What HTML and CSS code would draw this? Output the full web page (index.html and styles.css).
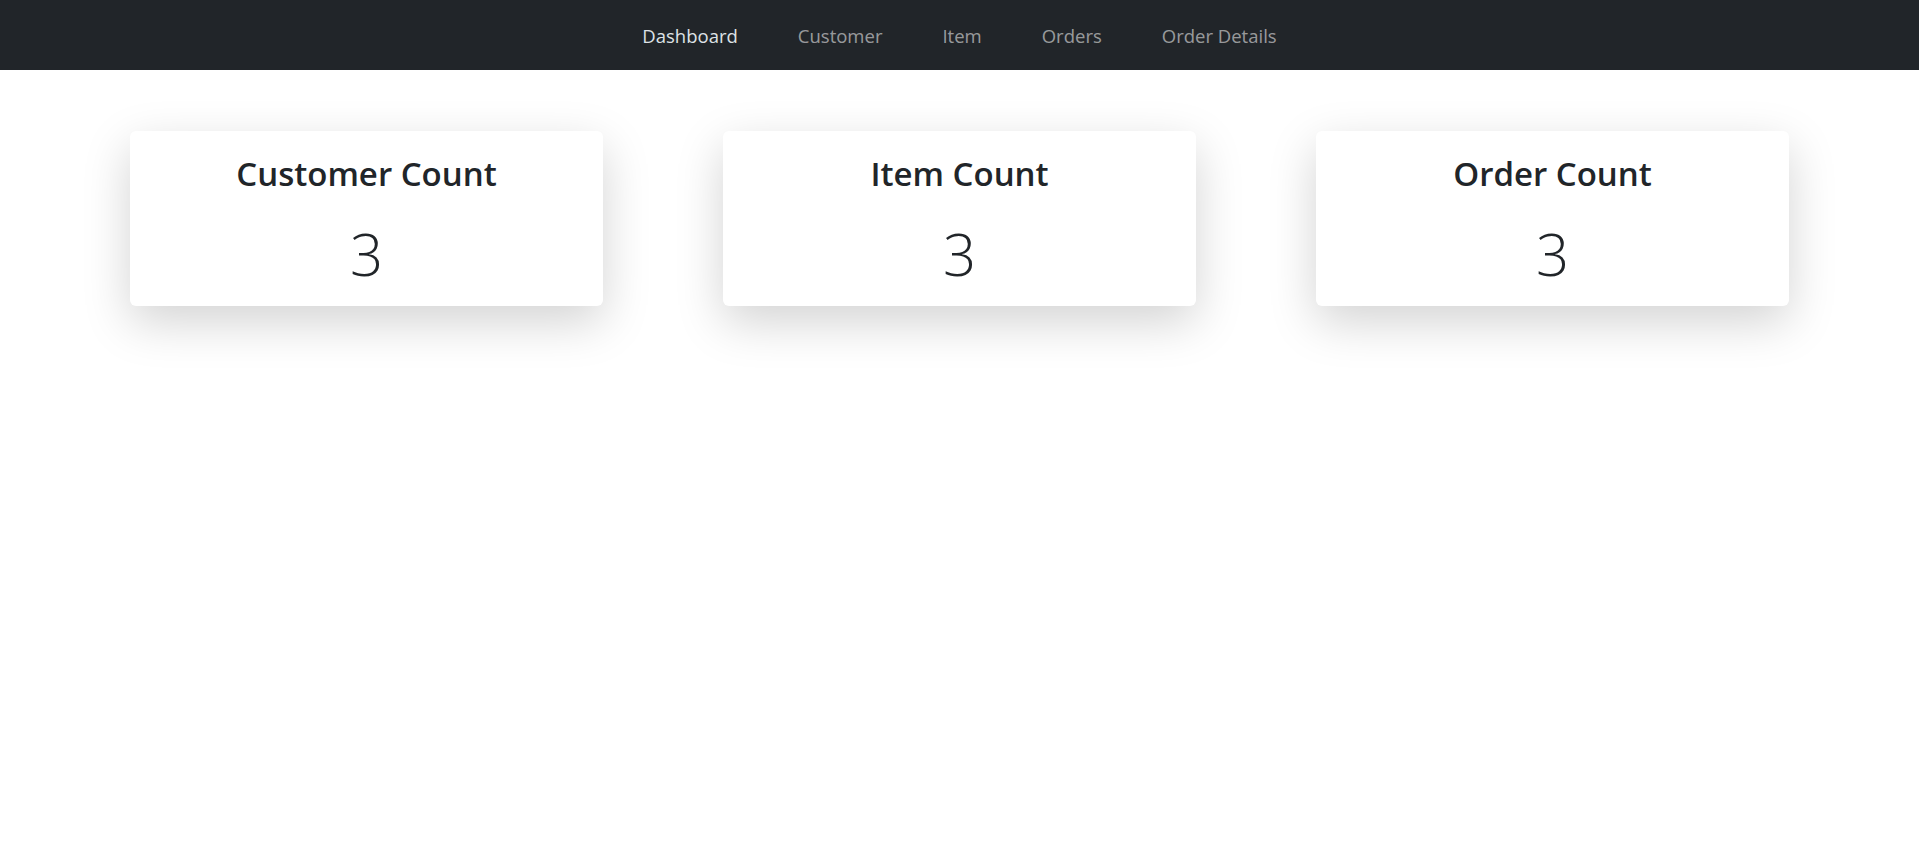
FILE: index.html
```html
<!DOCTYPE html>
<html lang="en">
<head>
<meta charset="utf-8">
<title>Dashboard</title>
<link rel="stylesheet" href="styles.css">
</head>
<body>
<nav class="navbar">
  <ul class="nav-list">
    <li><a class="nav-link active" href="#">Dashboard</a></li>
    <li><a class="nav-link" href="#">Customer</a></li>
    <li><a class="nav-link" href="#">Item</a></li>
    <li><a class="nav-link" href="#">Orders</a></li>
    <li><a class="nav-link" href="#">Order Details</a></li>
  </ul>
</nav>
<main class="cards">
  <section class="card">
    <h2 class="card-title">Customer Count</h2>
    <p class="card-count">3</p>
  </section>
  <section class="card">
    <h2 class="card-title">Item Count</h2>
    <p class="card-count">3</p>
  </section>
  <section class="card">
    <h2 class="card-title">Order Count</h2>
    <p class="card-count">3</p>
  </section>
</main>
</body>
</html>
```
FILE: styles.css
```css
* { box-sizing: border-box; }
html, body {
  margin: 0;
  padding: 0;
  background: #fff;
  font-family: "Open Sans", "Noto Sans", sans-serif;
  color: #212529;
}
body {
  min-height: 100vh;
}
.navbar {
  height: 70px;
  background: #212529;
  display: flex;
  align-items: center;
  justify-content: center;
}
.nav-list {
  list-style: none;
  margin: 0;
  padding: 1px 0 0;
  display: flex;
  align-items: center;
}
.nav-link {
  display: block;
  padding: 0 30px;
  font-size: 18.5px;
  line-height: 28px;
  text-decoration: none;
  color: rgba(255, 255, 255, 0.55);
}
.nav-link.active {
  color: #dee2e6;
}
.cards {
  display: flex;
  justify-content: center;
  gap: 120px;
  padding: 61px 0 120px;
}
.card {
  width: 473px;
  background: #fff;
  border-radius: 6px;
  box-shadow: 0 1rem 3rem rgba(0, 0, 0, 0.175);
  padding: 23px 16px 18px;
  text-align: center;
}
.card-title {
  margin: 0 0 25px;
  font-size: 33px;
  line-height: 1.2;
  font-weight: 600;
}
.card-count {
  margin: 0;
  font-size: 58px;
  line-height: 1.2;
  font-weight: 300;
}
```
